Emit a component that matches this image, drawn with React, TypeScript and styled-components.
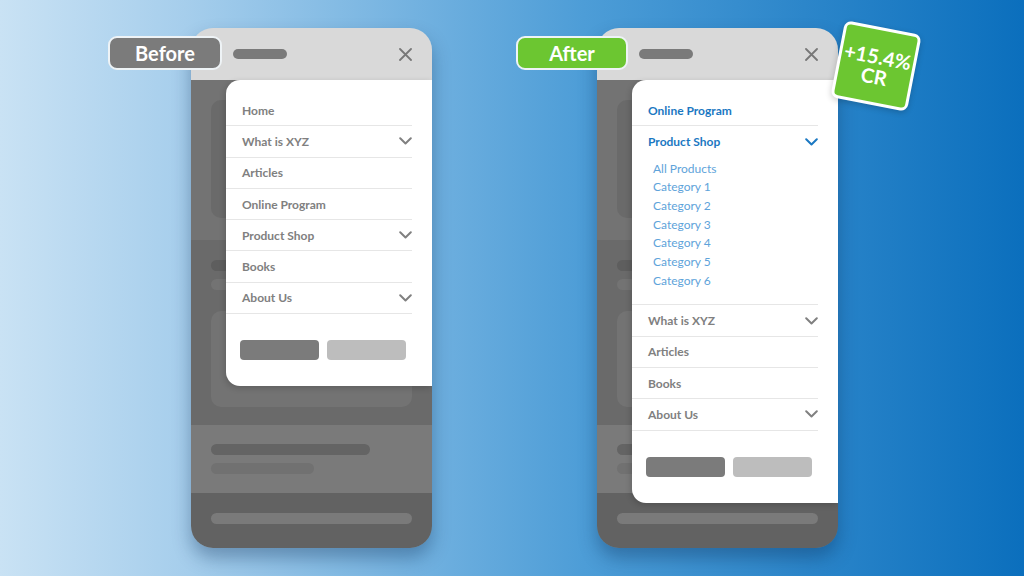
import React from 'react'
import styled, { createGlobalStyle } from 'styled-components'

const GlobalStyle = createGlobalStyle`
  html, body { margin: 0; padding: 0; }
  body { font-family: 'Lato', 'Open Sans', sans-serif; }
`

type MenuItem = { label: string; caret?: boolean; active?: boolean; children?: string[] }

const beforeMenu: MenuItem[] = [
  { label: 'Home' },
  { label: 'What is XYZ', caret: true },
  { label: 'Articles' },
  { label: 'Online Program' },
  { label: 'Product Shop', caret: true },
  { label: 'Books' },
  { label: 'About Us', caret: true },
]

const afterMenu: MenuItem[] = [
  { label: 'Online Program', active: true },
  {
    label: 'Product Shop',
    caret: true,
    active: true,
    children: ['All Products', 'Category 1', 'Category 2', 'Category 3', 'Category 4', 'Category 5', 'Category 6'],
  },
  { label: 'What is XYZ', caret: true },
  { label: 'Articles' },
  { label: 'Books' },
  { label: 'About Us', caret: true },
]

const Stage = styled.div`
  width: 1024px;
  height: 576px;
  overflow: hidden;
  box-sizing: border-box;
  padding: 28px 0 0 191px;
  display: flex;
  align-items: flex-start;
  gap: 165px;
  background: linear-gradient(90deg, #c9e2f4 0%, #a6ceec 18%, #4d9dd7 57%, #0b6fbd 100%);
`

const PhoneWrap = styled.div`
  position: relative;
  width: 241px;
  height: 520px;
`

const Phone = styled.div`
  position: relative;
  width: 100%;
  height: 100%;
  border-radius: 22px;
  overflow: hidden;
  display: flex;
  flex-direction: column;
  box-shadow: 0 10px 18px rgba(10, 40, 80, 0.35);
`

const Header = styled.div`
  height: 52px;
  flex: none;
  background: #d9d9d9;
  display: flex;
  align-items: center;
  justify-content: space-between;
  padding: 0 20px 0 42px;
`

const Pill = styled.div`
  width: 54px;
  height: 10px;
  border-radius: 5px;
  background: #7a7a7a;
`

const Section = styled.div<{ $h: number; $bg: string; $pt?: number }>`
  height: ${p => p.$h}px;
  flex: none;
  background: ${p => p.$bg};
  box-sizing: border-box;
  padding: ${p => p.$pt ?? 20}px 20px 0 20px;
  display: flex;
  flex-direction: column;
  gap: 8px;
`

const Card = styled.div<{ $h: number; $bg: string; $mt?: number }>`
  height: ${p => p.$h}px;
  margin-top: ${p => p.$mt ?? 0}px;
  border-radius: 10px;
  background: ${p => p.$bg};
`

const Bar = styled.div<{ $w: number; $bg: string }>`
  width: ${p => p.$w}px;
  height: 11px;
  border-radius: 6px;
  background: ${p => p.$bg};
`

const Panel = styled.div`
  position: absolute;
  top: 52px;
  right: 0;
  width: 206px;
  background: #fff;
  border-radius: 14px 0 0 14px;
  box-shadow: -1px 2px 6px rgba(0, 0, 0, 0.18);
  padding: 15px 0 26px 0;
  box-sizing: border-box;
`

const Row = styled.div<{ $active?: boolean; $open?: boolean }>`
  height: 31.3px;
  box-sizing: border-box;
  margin-right: 20px;
  padding: 0 0 0 16px;
  border-bottom: ${p => (p.$open ? 'none' : '1px solid #e6e6e6')};
  display: flex;
  align-items: center;
  justify-content: space-between;
  font-size: 12px;
  font-weight: 700;
  color: ${p => (p.$active ? '#1b78c2' : '#808080')};
`

const SubList = styled.div`
  margin-right: 20px;
  padding: 2px 0 14px 21px;
  border-bottom: 1px solid #e6e6e6;
`

const SubItem = styled.div`
  height: 18.7px;
  line-height: 18.7px;
  font-size: 12px;
  font-weight: 400;
  color: #5ea3da;
`

const Buttons = styled.div`
  display: flex;
  gap: 8px;
  padding: 26px 0 0 14px;
`

const Btn = styled.div<{ $bg: string }>`
  width: 79px;
  height: 20px;
  border-radius: 4px;
  background: ${p => p.$bg};
`

const Label = styled.div<{ $green?: boolean }>`
  position: absolute;
  top: 8px;
  left: ${p => (p.$green ? -81 : -83)}px;
  width: ${p => (p.$green ? 112 : 114)}px;
  height: 34px;
  box-sizing: border-box;
  border: 2px solid #eef3f6;
  border-radius: 9px;
  background: ${p => (p.$green ? '#6cc631' : '#7b7b7b')};
  color: #fff;
  font-size: 20px;
  font-weight: 700;
  display: flex;
  align-items: center;
  justify-content: center;
  z-index: 2;
`

const Stamp = styled.div`
  position: absolute;
  left: 240px;
  top: -1px;
  width: 78px;
  height: 78px;
  box-sizing: border-box;
  border: 3px solid #fff;
  border-radius: 7px;
  background: #6cc631;
  transform: rotate(11deg);
  color: #fff;
  font-size: 20px;
  font-weight: 700;
  line-height: 20px;
  display: flex;
  flex-direction: column;
  align-items: center;
  justify-content: center;
  box-shadow: 0 2px 6px rgba(0, 0, 0, 0.2);
  z-index: 2;
`

function Chevron({ color }: { color: string }) {
  return (
    <svg width="13" height="8" viewBox="0 0 13 8" fill="none">
      <path d="M1.2 1.3 L6.5 6.5 L11.8 1.3" stroke={color} strokeWidth="2" strokeLinecap="round" strokeLinejoin="round" />
    </svg>
  )
}

function CloseIcon() {
  return (
    <svg width="13" height="13" viewBox="0 0 13 13" fill="none">
      <path d="M1 1 L12 12 M12 1 L1 12" stroke="#777" strokeWidth="1.8" strokeLinecap="round" />
    </svg>
  )
}

function Menu({ items }: { items: MenuItem[] }) {
  return (
    <Panel>
      {items.map(item => (
        <React.Fragment key={item.label}>
          <Row $active={item.active} $open={!!item.children}>
            <span>{item.label}</span>
            {item.caret && <Chevron color={item.active ? '#1b78c2' : '#808080'} />}
          </Row>
          {item.children && (
            <SubList>
              {item.children.map(c => (
                <SubItem key={c}>{c}</SubItem>
              ))}
            </SubList>
          )}
        </React.Fragment>
      ))}
      <Buttons>
        <Btn $bg="#7b7b7b" />
        <Btn $bg="#bdbdbd" />
      </Buttons>
    </Panel>
  )
}

function Mockup({ items }: { items: MenuItem[] }) {
  return (
    <Phone>
      <Header>
        <Pill />
        <CloseIcon />
      </Header>
      <Section $h={160} $bg="#737373">
        <Card $h={118} $bg="#6a6a6a" />
      </Section>
      <Section $h={185} $bg="#6a6a6a">
        <Bar $w={120} $bg="#5e5e5e" />
        <Bar $w={100} $bg="#737373" />
        <Card $h={96} $bg="#737373" $mt={13} />
      </Section>
      <Section $h={68} $bg="#7a7a7a" $pt={19}>
        <Bar $w={159} $bg="#646464" />
        <Bar $w={103} $bg="#717171" />
      </Section>
      <Section $h={55} $bg="#626262">
        <Bar $w={201} $bg="#7a7a7a" />
      </Section>
      <Menu items={items} />
    </Phone>
  )
}

export default function App() {
  return (
    <>
      <GlobalStyle />
      <Stage>
        <PhoneWrap>
          <Label>Before</Label>
          <Mockup items={beforeMenu} />
        </PhoneWrap>
        <PhoneWrap>
          <Label $green>After</Label>
          <Mockup items={afterMenu} />
          <Stamp>
            <span>+15.4%</span>
            <span>CR</span>
          </Stamp>
        </PhoneWrap>
      </Stage>
    </>
  )
}
